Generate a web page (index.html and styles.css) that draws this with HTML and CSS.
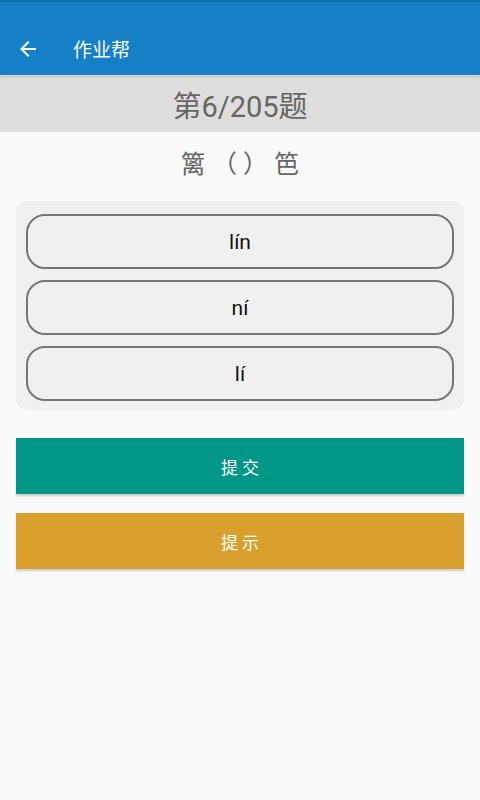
FILE: index.html
```html
<!DOCTYPE html>
<html lang="zh">
<head>
<meta charset="utf-8">
<link rel="stylesheet" href="styles.css">
</head>
<body>
<header class="appbar">
  <svg class="back" width="24" height="24" viewBox="0 0 24 24"><path d="M20 11H7.83l5.59-5.59L12 4l-8 8 8 8 1.41-1.41L7.83 13H20v-2z" fill="#fff"/></svg>
  <span class="title">作业帮</span>
</header>
<div class="progress">第6/205题</div>
<div class="question">篱 （ ） 笆</div>
<div class="options">
  <div class="option">lín</div>
  <div class="option">ní</div>
  <div class="option">lí</div>
</div>
<div class="btn submit">提 交</div>
<div class="btn hint">提 示</div>
</body>
</html>
```
FILE: styles.css
```css
html, body { margin: 0; padding: 0; }
body {
  background: #fafafa;
  font-family: Roboto, "Noto Sans CJK SC", "Noto Sans", sans-serif;
  width: 480px;
  min-height: 800px;
}
.appbar {
  height: 75px;
  background: #1580c6;
  border-top: 2px solid #0f6fb0;
  box-sizing: border-box;
  display: flex;
  align-items: center;
  padding: 20px 0 0 16px;
  box-shadow: 0 1px 3px rgba(0,0,0,0.25);
  position: relative;
  z-index: 1;
}
.back { display: block; }
.title {
  color: #fff;
  font-size: 19px;
  margin-left: 33px;
}
.progress {
  height: 56px;
  background: #e0dedd;
  color: #666;
  font-size: 29px;
  display: flex;
  align-items: center;
  justify-content: center;
  margin-top: 1px;
}
.question {
  color: #666;
  font-size: 25px;
  text-align: center;
  padding-top: 16px;
  height: 54px;
  box-sizing: border-box;
  line-height: 34px;
}
.options {
  margin: 15px 16px 0;
  background: #f0f0f0;
  border-radius: 10px;
  padding: 13px 10px 9px;
  display: flex;
  flex-direction: column;
  gap: 11px;
}
.option {
  height: 55px;
  box-sizing: border-box;
  border: 2px solid #767676;
  border-radius: 19px;
  display: flex;
  align-items: center;
  justify-content: center;
  font-family: Roboto, "Liberation Sans", sans-serif;
  font-size: 21px;
  color: #111;
}
.btn {
  margin: 0 16px;
  height: 56px;
  display: flex;
  align-items: center;
  justify-content: center;
  color: #fff;
  font-size: 17px;
  box-shadow: 0 2px 2px rgba(0,0,0,0.18);
}
.submit { background: #009688; margin-top: 28px; }
.hint { background: #d9a02e; margin-top: 19px; }
```
